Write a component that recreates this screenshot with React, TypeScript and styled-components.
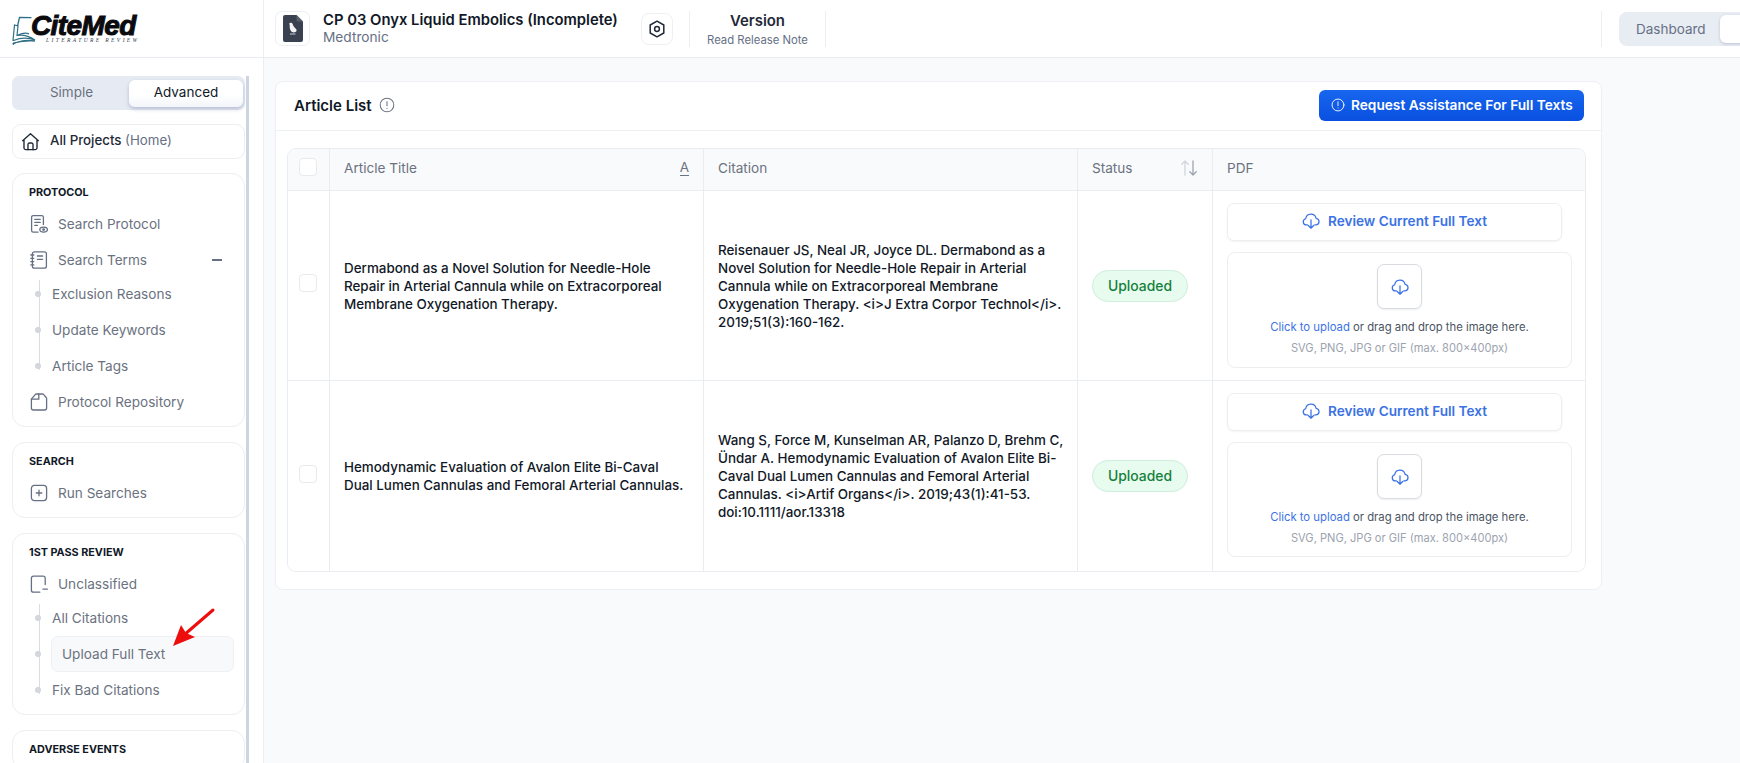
import React, { FC } from 'react'
import styled, { createGlobalStyle } from 'styled-components'

const GlobalStyle = createGlobalStyle`
  html, body { margin: 0; padding: 0; height: 100%; overflow: hidden; background: #fff; }
  body { font-family: Inter, "Noto Sans", "Liberation Sans", sans-serif; color: #111827; }
  * { box-sizing: border-box; }
`

const Stroke: FC<{ size?: number; color?: string; width?: number; children: React.ReactNode }> = ({ size = 20, color = '#667085', width = 1.3, children }) => (
  <svg width={size} height={size} viewBox="0 0 20 20" fill="none" stroke={color} strokeWidth={width} strokeLinecap="round" strokeLinejoin="round" style={{ flex: 'none' }}>
    {children}
  </svg>
)

const HomeIcon = () => (
  <Stroke size={21} color="#1f2937" width={1.3}>
    <path d="M2.5 9.2 10 2.6l7.500 6.600M3.800 8.200V16a1.800 1.800 0 0 0 1.800 1.800h8.800a1.800 1.800 0 0 0 1.800-1.800V8.200" />
    <path d="M7.600 17.800v-5a1.400 1.400 0 0 1 1.400-1.400h2a1.400 1.400 0 0 1 1.400 1.400v5" />
  </Stroke>
)
const ProtocolIcon = () => (
  <Stroke>
    <path d="M9 18.200H4.200a1.600 1.600 0 0 1-1.600-1.600V3.200a1.600 1.600 0 0 1 1.600-1.600h8.600a1.600 1.600 0 0 1 1.600 1.600v7.300" />
    <path d="M5.800 5.400h5.400M5.800 8.400h5.400M5.800 11.400h2.600" />
    <ellipse cx="14.600" cy="15.600" rx="3.800" ry="2.500" />
    <circle cx="14.600" cy="15.600" r=".8" />
  </Stroke>
)
const TermsIcon = () => (
  <Stroke>
    <rect x="3.400" y="1.800" width="14" height="16.400" rx="2" />
    <path d="M1.800 5h3M1.800 8.300h3M1.800 11.600h3M1.800 14.900h3M8.400 6h5.200M8.400 9.300h5.200" />
  </Stroke>
)
const RepoIcon = () => (
  <Stroke>
    <path d="M2.400 7.200V16a2 2 0 0 0 2 2h11.200a2 2 0 0 0 2-2V6.500a1.500 1.500 0 0 0-.4-1L14.500 2.400a1 1 0 0 0-.8-.4H7.200a1 1 0 0 0-.8.4Z" />
    <path d="M2.400 7.200h7.400V2" />
  </Stroke>
)
const PlusIcon = () => (
  <Stroke>
    <rect x="2.400" y="2.400" width="15.200" height="15.200" rx="3" />
    <path d="M10 7.200v5.600M7.200 10h5.600" />
  </Stroke>
)
const UnclassIcon = () => (
  <Stroke>
    <path d="M16.200 10.500V4.200a2 2 0 0 0-2-2H4.400a2 2 0 0 0-2 2v12a2 2 0 0 0 2 2h6.400" />
    <path d="M14 15.200h4.400" />
  </Stroke>
)
const CloudIcon: FC<{ size?: number }> = ({ size = 18 }) => (
  <Stroke size={size} color="#3b72e4" width={1.4}>
    <path d="M6 14.400H4.800a3.500 3.500 0 0 1-.7-6.900 5.900 5.900 0 0 1 11.600-.4 3.700 3.700 0 0 1 .2 7.300h-1.700" />
    <path d="M10 8.800v9M7 15l3 3 3-3" />
  </Stroke>
)
const InfoIcon: FC<{ color: string; size: number }> = ({ color, size }) => (
  <Stroke size={size} color={color} width={1.3}>
    <circle cx="10" cy="10" r="8.500" />
    <path d="M10 5.500v5.400M10 14.200v.1" />
  </Stroke>
)
const SortIcon = () => (
  <svg width="18" height="20" viewBox="0 0 18 20" fill="none" strokeWidth="1.300" strokeLinecap="round" strokeLinejoin="round">
    <path d="M5 17V3M1.800 6.200 5 3l3.200 3.200" stroke="#d1d5db" />
    <path d="M13 3v14M9.800 13.800 13 17l3.200-3.200" stroke="#9ca3af" />
  </svg>
)
const SettingsIcon = () => (
  <svg width="16" height="18" viewBox="0 0 16 18" fill="none" stroke="#1f2937" strokeWidth="1.500" strokeLinejoin="round">
    <path d="M8 1.200 14.800 5v8L8 16.800 1.200 13V5Z" />
    <circle cx="8" cy="9" r="2.400" />
  </svg>
)
const FileBird = () => (
  <svg width="20" height="27" viewBox="0 0 20 27">
    <path d="M2 0h11.500L20 6.500V25a2 2 0 0 1-2 2H2a2 2 0 0 1-2-2V2a2 2 0 0 1 2-2Z" fill="#3a4150" />
    <path d="M13.500 0 20 6.500h-5a1.500 1.500 0 0 1-1.500-1.500Z" fill="#59606e" />
    <path d="M6.200 8.400c1.300-1 2.900-.6 3.500.8l1 2.300 2.500 2.700c.7.900.5 2.400-.7 2.900-1.800.7-3.700.2-4.700-1.300-1-1.600-1.300-3.700-1-5.200Z" fill="#f3f4f6" />
    <path d="M7 18.500h5.500v1H7Z" fill="#c9ccd3" />
  </svg>
)
const BookLogo = () => (
  <svg width="34" height="30" viewBox="0 0 34 30" fill="none">
    <path d="M1 25.500 2.500 10l3.500 1-1 9.500c6-1 12 .5 18 4.500-7-2.500-14-2.500-21.500.5Z" fill="#fff" stroke="#2f6f86" strokeWidth="1.200" />
    <path d="M5.500 11 7.500 2.500l12 .2M6 20c4-2 8-2.500 11-1.200" stroke="#2f6f86" strokeWidth="1.300" />
    <path d="M1 29.500c6-4 14-5 22-3.500-7-.4-15 .6-22 2Z" fill="#2f6f86" stroke="#2f6f86" strokeWidth="1" />
  </svg>
)

const Page = styled.div`
  display: flex;
  flex-direction: column;
  width: 1740px;
  height: 763px;
  overflow: hidden;
`
const Header = styled.header`
  display: flex;
  align-items: center;
  flex: none;
  height: 58px;
  background: #fff;
  border-bottom: 1px solid #e9ebf0;
`
const LogoCell = styled.div`
  flex: none;
  display: flex;
  width: 264px;
  height: 100%;
  padding: 15px 0 0 12px;
  border-right: 1px solid #eceef2;
`
const LogoWords = styled.div`
  margin-left: -15px;
  display: flex;
  flex-direction: column;
`
const LogoName = styled.span`
  font-family: "Liberation Sans", Arial, sans-serif;
  font-style: italic;
  font-weight: 700;
  font-size: 28px;
  line-height: 22px;
  letter-spacing: -.6px;
  color: #0b0b0f;
  -webkit-text-stroke: 1px #0b0b0f;
`
const LogoTag = styled.span`
  font-family: "Liberation Serif", serif;
  font-style: italic;
  font-size: 5.500px;
  line-height: 7px;
  letter-spacing: 2.400px;
  color: #374151;
  margin-left: 15px;
  white-space: nowrap;
`
const ProjectIcon = styled.div`
  flex: none;
  display: flex;
  align-items: center;
  justify-content: center;
  width: 35px;
  height: 35px;
  margin-left: 11px;
  border: 1px solid #eceef2;
  border-radius: 7px;
`
const ProjectText = styled.div`
  flex: none;
  width: 295px;
  margin-left: 13px;
  padding-bottom: 4px;
`
const ProjectName = styled.div`
  font-size: 14.800px;
  line-height: 20px;
  font-weight: 600;
  color: #111827;
  white-space: nowrap;
`
const ProjectOwner = styled.div`
  font-size: 13.700px;
  line-height: 14px;
  color: #667085;
`
const SettingsButton = styled.button`
  flex: none;
  display: flex;
  align-items: center;
  justify-content: center;
  width: 32px;
  height: 32px;
  margin-left: 23px;
  padding: 0;
  background: #fff;
  border: 1px solid #eef0f3;
  border-radius: 8px;
`
const VersionBlock = styled.div`
  flex: none;
  width: 137px;
  height: 36px;
  margin-left: 16px;
  border-left: 1px solid #eceef2;
  border-right: 1px solid #eceef2;
  text-align: center;
`
const VersionTitle = styled.div`
  font-size: 14.900px;
  line-height: 20px;
  font-weight: 600;
  color: #1f2937;
`
const VersionNote = styled.div`
  font-size: 11.300px;
  line-height: 19px;
  color: #667085;
`
const HeaderEnd = styled.div`
  flex: none;
  display: flex;
  align-items: center;
  width: 139px;
  height: 36px;
  margin-left: auto;
  padding-left: 17px;
  overflow: hidden;
  border-left: 1px solid #eceef2;
`
const ViewToggle = styled.div`
  flex: none;
  display: flex;
  align-items: center;
  width: 240px;
  height: 34px;
  padding: 3px;
  background: #e8ecf3;
  border-radius: 8px;
`
const ViewLabel = styled.span`
  flex: none;
  width: 84px;
  margin-left: 14px;
  font-size: 13.500px;
  color: #667085;
`
const ViewActive = styled.span`
  flex: 1;
  height: 28px;
  background: #fff;
  border-radius: 6px;
  box-shadow: 0 1px 3px rgba(60, 70, 110, .25);
`
const Body = styled.div`
  flex: 1;
  min-height: 0;
  display: flex;
`
const Sidebar = styled.aside`
  flex: none;
  display: flex;
  gap: 1px;
  width: 264px;
  padding: 18px 0 0 12px;
  background: #fff;
  border-right: 1px solid #eceef2;
  overflow: hidden;
`
const SideColumn = styled.div`
  flex: none;
  display: flex;
  flex-direction: column;
  gap: 14px;
  width: 233px;
`
const ScrollThumb = styled.div`
  flex: none;
  width: 3px;
  height: 800px;
  background: #cdd5e3;
`
const ModeToggle = styled.div`
  flex: none;
  display: grid;
  grid-template-columns: 117px 1fr;
  height: 34px;
  padding: 4px 2px 3px 0;
  background: #e6ebf3;
  border-radius: 7px;
`
const ModeOption = styled.div<{ $active?: boolean }>`
  display: flex;
  align-items: center;
  justify-content: center;
  padding: 0 0 4px ${p => (p.$active ? '0' : '2px')};
  font-size: 13.500px;
  color: ${p => (p.$active ? '#111827' : '#6b7280')};
  background: ${p => (p.$active ? 'linear-gradient(180deg, #fff 55%, #f3f5fa)' : 'transparent')};
  border-radius: 6px;
  box-shadow: ${p => (p.$active ? '0 2px 4px rgba(70, 80, 140, .3)' : 'none')};
`
const HomeLink = styled.div`
  flex: none;
  display: flex;
  align-items: center;
  gap: 9px;
  height: 35px;
  padding: 0 0 3px 7px;
  background: #fff;
  border: 1px solid #eceef2;
  border-radius: 9px;
  font-size: 13.300px;
  font-weight: 500;
  color: #1f2937;
`
const HomeGlyph = styled.span`
  display: flex;
  margin-top: 3px;
`
const HomeHint = styled.span`
  font-weight: 400;
  color: #667085;
`
const NavCard = styled.section`
  flex: none;
  padding: 12px 0 6px 15px;
  background: #fff;
  border: 1px solid #eceef2;
  border-radius: 13px;
  & + & {
    margin-top: 1px;
  }
`
const NavTitle = styled.h4`
  margin: 0 0 7px 1px;
  font-size: 10.800px;
  line-height: 13px;
  font-weight: 700;
  color: #111827;
`
const NavRow = styled.div`
  display: flex;
  align-items: center;
  gap: 9px;
  height: 36px;
  margin-left: 1px;
  font-size: 13.600px;
  color: #6b7280;
`
const Collapse = styled.span`
  width: 10px;
  height: 1.500px;
  margin-left: auto;
  margin-right: 22px;
  background: #667085;
`
const SubList = styled.div`
  position: relative;
  margin-top: -2px;
  &::before {
    content: '';
    position: absolute;
    left: 10.500px;
    top: 4px;
    bottom: 14px;
    width: 1px;
    background: #d9dce2;
  }
`
const SubRow = styled.div<{ $active?: boolean }>`
  position: relative;
  display: flex;
  align-items: center;
  height: 36px;
  margin-left: ${p => (p.$active ? '23px' : '24px')};
  margin-right: 10px;
  font-size: 13.600px;
  color: #6b7280;
  ${p => (p.$active ? 'padding-left: 10px; background: #f8f9fb; border: 1px solid #eef0f4; border-radius: 7px;' : '')}
  &::before {
    content: '';
    position: absolute;
    left: -17px;
    top: 50%;
    width: 6px;
    height: 6px;
    margin-top: -3px;
    border-radius: 50%;
    background: #d3d6dc;
  }
`
const Arrow = styled.svg`
  position: absolute;
  left: 118px;
  top: -30px;
  pointer-events: none;
`
const Main = styled.main`
  flex: 1;
  min-width: 0;
  padding: 23px 0 0 11px;
  background: #f9fafc;
`
const Card = styled.div`
  width: 1327px;
  background: #fff;
  border: 1px solid #edeff3;
  border-radius: 8px;
  padding-bottom: 17px;
`
const CardHead = styled.div`
  display: flex;
  align-items: center;
  height: 49px;
  padding: 0 17px 2px 18px;
  border-bottom: 1px solid #eef0f3;
`
const CardTitle = styled.h2`
  margin: 0 7px 0 0;
  font-size: 15px;
  font-weight: 600;
  color: #111827;
`
const AssistButton = styled.button`
  display: flex;
  align-items: center;
  gap: 6px;
  height: 31px;
  width: 265px;
  margin-left: auto;
  padding: 0 0 0 12px;
  background: linear-gradient(180deg, #1766ee, #0a50e0);
  border: none;
  border-radius: 6px;
  font-family: inherit;
  font-size: 13.700px;
  font-weight: 600;
  color: #fff;
  white-space: nowrap;
`
const Table = styled.div`
  margin: 17px 15px 0 11px;
  border: 1px solid #e9ecf0;
  border-radius: 9px;
  overflow: hidden;
`
const Row = styled.div<{ $head?: boolean }>`
  display: grid;
  grid-template-columns: 42px 374px 374px 135px 1fr;
  height: ${p => (p.$head ? '42px' : '190px')};
  background: ${p => (p.$head ? '#f9fafb' : '#fff')};
  &:not(:last-child) {
    border-bottom: 1px solid #e9ecf0;
  }
`
const Cell = styled.div<{ $between?: boolean }>`
  display: flex;
  align-items: center;
  justify-content: ${p => (p.$between ? 'space-between' : 'flex-start')};
  padding: 0 10px 0 14px;
  &:not(:last-child) {
    border-right: 1px solid #e9ecf0;
  }
`
const HeadCell = styled(Cell)`
  padding: 0 14px 3px;
`
const CheckCell = styled(Cell)`
  justify-content: center;
  padding: 0 2px 5px 0;
`
const Checkbox = styled.span`
  width: 18px;
  height: 18px;
  background: #fff;
  border: 1px solid #e8eaee;
  border-radius: 4px;
`
const HeadLabel = styled.span`
  font-size: 13.600px;
  color: #6b7280;
`
const AlphaSort = styled.span`
  font-size: 13.500px;
  line-height: 15px;
  color: #6b7280;
  border-bottom: 1px solid #6b7280;
`
const ArticleText = styled.div`
  font-size: 13.400px;
  line-height: 18px;
  font-weight: 500;
  color: #111827;
`
const Badge = styled.span`
  display: inline-flex;
  align-items: center;
  justify-content: center;
  width: 96px;
  height: 32px;
  background: #e8fbef;
  border: 1px solid #cfeedd;
  border-radius: 16px;
  font-size: 13.900px;
  font-weight: 500;
  color: #15803d;
`
const PdfCell = styled(Cell)`
  flex-direction: column;
  align-items: flex-start;
  gap: 11px;
  padding: 12px 13px 12px 14px;
  ${Row}:last-child & {
    padding-bottom: 14px;
  }
`
const ReviewButton = styled.button`
  flex: none;
  display: flex;
  align-items: center;
  justify-content: center;
  gap: 8px;
  width: 335px;
  height: 38px;
  padding-bottom: 4px;
  background: #fff;
  border: 1px solid #eceef2;
  border-radius: 7px;
  box-shadow: 0 1px 2px rgba(16, 24, 40, .05);
  font-family: inherit;
  font-size: 13.600px;
  font-weight: 600;
  color: #3b72e4;
`
const DropZone = styled.div`
  flex: 1;
  display: flex;
  flex-direction: column;
  align-items: center;
  width: 345px;
  padding-top: 11px;
  border: 1px solid #eceef2;
  border-radius: 8px;
`
const DropIcon = styled.div`
  display: flex;
  align-items: center;
  justify-content: center;
  width: 45px;
  height: 45px;
  background: #fff;
  border: 1px solid #d8dbe0;
  border-radius: 7px;
  box-shadow: 0 1px 2px rgba(16, 24, 40, .07);
`
const DropText = styled.div`
  margin-top: 11px;
  font-size: 11.300px;
  line-height: 14px;
  color: #4b5563;
`
const UploadLink = styled.span`
  color: #3b72e4;
`
const DropHint = styled.div`
  margin-top: 7px;
  font-size: 11.100px;
  line-height: 14px;
  color: #9ca3af;
`

const articles = [
  {
    title: 'Dermabond as a Novel Solution for Needle-Hole Repair in Arterial Cannula while on Extracorporeal Membrane Oxygenation Therapy.',
    citation: 'Reisenauer JS, Neal JR, Joyce DL. Dermabond as a Novel Solution for Needle-Hole Repair in Arterial Cannula while on Extracorporeal Membrane Oxygenation Therapy. <i>J Extra Corpor Technol</i>. 2019;51(3):160-162.',
  },
  {
    title: 'Hemodynamic Evaluation of Avalon Elite Bi-Caval Dual\u00A0Lumen Cannulas and Femoral Arterial Cannulas.',
    citation: 'Wang S, Force M, Kunselman AR, Palanzo D, Brehm C, Ündar A. Hemodynamic Evaluation of Avalon Elite Bi-Caval Dual Lumen Cannulas and Femoral Arterial Cannulas. <i>Artif Organs</i>. 2019;43(1):41-53. doi:10.1111/aor.13318',
  },
]

const App: FC = () => (
  <Page>
    <GlobalStyle />
    <Header>
      <LogoCell>
        <BookLogo />
        <LogoWords>
          <LogoName>CiteMed</LogoName>
          <LogoTag>LITERATURE REVIEW</LogoTag>
        </LogoWords>
      </LogoCell>
      <ProjectIcon><FileBird /></ProjectIcon>
      <ProjectText>
        <ProjectName>CP 03 Onyx Liquid Embolics (Incomplete)</ProjectName>
        <ProjectOwner>Medtronic</ProjectOwner>
      </ProjectText>
      <SettingsButton><SettingsIcon /></SettingsButton>
      <VersionBlock>
        <VersionTitle>Version</VersionTitle>
        <VersionNote>Read Release Note</VersionNote>
      </VersionBlock>
      <HeaderEnd>
        <ViewToggle>
          <ViewLabel>Dashboard</ViewLabel>
          <ViewActive />
        </ViewToggle>
      </HeaderEnd>
    </Header>
    <Body>
      <Sidebar>
        <SideColumn>
          <ModeToggle>
            <ModeOption>Simple</ModeOption>
            <ModeOption $active>Advanced</ModeOption>
          </ModeToggle>
          <HomeLink>
            <HomeGlyph><HomeIcon /></HomeGlyph>
            <span>All Projects <HomeHint>(Home)</HomeHint></span>
          </HomeLink>
          <NavCard>
            <NavTitle>PROTOCOL</NavTitle>
            <NavRow><ProtocolIcon />Search Protocol</NavRow>
            <NavRow><TermsIcon />Search Terms<Collapse /></NavRow>
            <SubList>
              <SubRow>Exclusion Reasons</SubRow>
              <SubRow>Update Keywords</SubRow>
              <SubRow>Article Tags</SubRow>
            </SubList>
            <NavRow><RepoIcon />Protocol Repository</NavRow>
          </NavCard>
          <NavCard>
            <NavTitle>SEARCH</NavTitle>
            <NavRow><PlusIcon />Run Searches</NavRow>
          </NavCard>
          <NavCard>
            <NavTitle>1ST PASS REVIEW</NavTitle>
            <NavRow><UnclassIcon />Unclassified</NavRow>
            <SubList>
              <SubRow>All Citations</SubRow>
              <SubRow $active>
                Upload Full Text
                <Arrow width="46" height="42" viewBox="0 0 46 42">
                  <path d="M43 3 14 28" stroke="#ee0d0d" strokeWidth="3" strokeLinecap="round" />
                  <path d="M3 39 11 18l5 8 9 4Z" fill="#ee0d0d" />
                </Arrow>
              </SubRow>
              <SubRow>Fix Bad Citations</SubRow>
            </SubList>
          </NavCard>
          <NavCard>
            <NavTitle>ADVERSE EVENTS</NavTitle>
          </NavCard>
        </SideColumn>
        <ScrollThumb />
      </Sidebar>
      <Main>
        <Card>
          <CardHead>
            <CardTitle>Article List</CardTitle>
            <InfoIcon color="#6b7280" size={16} />
            <AssistButton><InfoIcon color="#fff" size={14} />Request Assistance For Full Texts</AssistButton>
          </CardHead>
          <Table>
            <Row $head>
              <CheckCell><Checkbox /></CheckCell>
              <HeadCell $between><HeadLabel>Article Title</HeadLabel><AlphaSort>A</AlphaSort></HeadCell>
              <HeadCell><HeadLabel>Citation</HeadLabel></HeadCell>
              <HeadCell $between><HeadLabel>Status</HeadLabel><SortIcon /></HeadCell>
              <HeadCell><HeadLabel>PDF</HeadLabel></HeadCell>
            </Row>
            {articles.map(article => (
              <Row key={article.title}>
                <CheckCell><Checkbox /></CheckCell>
                <Cell><ArticleText>{article.title}</ArticleText></Cell>
                <Cell><ArticleText>{article.citation}</ArticleText></Cell>
                <Cell><Badge>Uploaded</Badge></Cell>
                <PdfCell>
                  <ReviewButton><CloudIcon />Review Current Full Text</ReviewButton>
                  <DropZone>
                    <DropIcon><CloudIcon /></DropIcon>
                    <DropText><UploadLink>Click to upload</UploadLink> or drag and drop the image here.</DropText>
                    <DropHint>SVG, PNG, JPG or GIF (max. 800×400px)</DropHint>
                  </DropZone>
                </PdfCell>
              </Row>
            ))}
          </Table>
        </Card>
      </Main>
    </Body>
  </Page>
)

export default App
